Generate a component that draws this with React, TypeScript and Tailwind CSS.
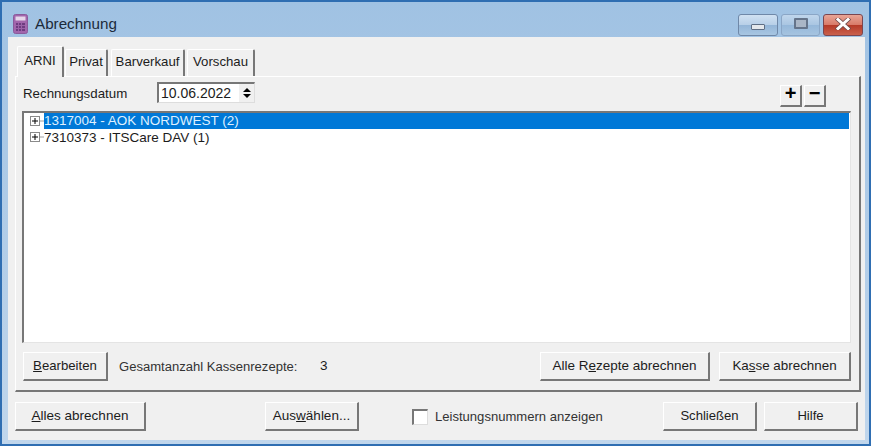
import type { ReactNode } from "react";

function Btn({ className, children }: { className: string; children: ReactNode }) {
  return (
    <button className={`flex items-center justify-center bg-[#f0f0f0] text-[#1c1c1c] border-t border-l border-t-[#fff] border-l-[#fff] border-r-2 border-b-2 border-r-[#777] border-b-[#777] ${className}`}>
      <span>{children}</span>
    </button>
  );
}

function Tab({ label, active, className }: { label: string; active?: boolean; className: string }) {
  return (
    <div className={`flex items-center justify-center bg-[#f0f0f0] text-[13.2px] text-[#1c1c1c] border-t border-l border-t-[#fff] border-l-[#fff] border-r-2 border-r-[#777] rounded-t-[2px] ${active ? "h-[31px] pb-[2px] -mb-px" : "h-[27px] pb-[3px]"} ${className}`}>
      {label}
    </div>
  );
}

function Expander() {
  return (
    <svg width="14" height="11" viewBox="0 0 14 11" className="shrink-0">
      <rect x="0.5" y="0.5" width="9" height="9" fill="#fff" stroke="#8a8a8a" />
      <path d="M2 5h6M5 2v6" stroke="#000" strokeWidth="1" />
      <path d="M10 5h4" stroke="#a0a0a0" strokeWidth="1" />
    </svg>
  );
}

function CalcIcon() {
  return (
    <svg width="15" height="20" viewBox="0 0 15 20" className="shrink-0">
      <rect x="0.5" y="0.5" width="14" height="19" rx="2" fill="#a266ac" stroke="#8a5a9c" />
      <rect x="2.5" y="2.5" width="10" height="4" fill="#e6d6ea" />
      <rect x="3" y="9" width="9" height="8" fill="#6e3c80" />
      <path d="M5.5 9v8M8.5 9v8M3 11.5h9M3 14.5h9" stroke="#9a62a8" strokeWidth="1" />
    </svg>
  );
}

function CaptionButton({ className, children }: { className: string; children: ReactNode }) {
  return (
    <div className={`flex items-center justify-center h-[22px] rounded-[3px] border ${className}`}>
      {children}
    </div>
  );
}

export default function App() {
  return (
    <div className="w-[871px] h-[446px] flex flex-col bg-gradient-to-b from-[#a0c2e3] to-[#c0d6ec] border-t-2 border-x-2 border-[#2f6eb2] border-b-[2px] font-['Liberation_Sans',Arial,sans-serif] text-[13.5px] text-[#1c1c1c]">
      {/* title bar */}
      <div className="h-[35px] flex items-center pl-[11px] pr-[6px] shrink-0">
        <div className="flex items-center mt-[9px]">
          <CalcIcon />
          <span className="ml-[7px] text-[15.2px] text-[#1c2a3a]">Abrechnung</span>
        </div>
        <div className="ml-auto flex gap-[3px] mt-[10px]">
          <CaptionButton className="w-[40px] border-[#6f88a8] bg-[linear-gradient(#d0e1f2_0%,#b8d0e8_48%,#94b6d8_52%,#a8c6e2_100%)]">
            <div className="w-[14px] h-[6px] mt-[5px] bg-[#e4e8ec] border border-[#5f6f85] rounded-[1px]" />
          </CaptionButton>
          <CaptionButton className="w-[39px] border-[#8aa6c6] bg-[linear-gradient(#c0d6ec_0%,#aac6e2_48%,#96b8da_52%,#a6c4e0_100%)]">
            <div className="w-[14px] h-[11px] bg-[#aab6c6] border-2 border-[#65748a] rounded-[1px] -mt-[2px]" />
          </CaptionButton>
          <CaptionButton className="w-[40px] border-[#7a4650] bg-[linear-gradient(#e8a596_0%,#d87b6a_48%,#b53a28_52%,#c9604c_100%)]">
            <svg width="16" height="12" viewBox="0 0 16 12" className="-mt-[1px]">
              <path d="M3 1.5 L13 10.5 M13 1.5 L3 10.5" stroke="#6e4a4a" strokeWidth="4.4" strokeLinecap="square" />
              <path d="M3 1.5 L13 10.5 M13 1.5 L3 10.5" stroke="#fff" strokeWidth="3" strokeLinecap="square" />
            </svg>
          </CaptionButton>
        </div>
      </div>

      {/* client */}
      <div className="flex-1 ml-[6px] mr-[4px] mb-[4px] bg-[#f0f0f0] flex flex-col pl-[7px] pr-[4px] pt-[9px]">
        <div className="flex items-end h-[30px] pl-[2px] relative z-10">
          <Tab label="ARNI" active className="w-[47px]" />
          <Tab label="Privat" className="w-[43px] ml-[1px]" />
          <Tab label="Barverkauf" className="w-[74px] ml-[3px]" />
          <Tab label="Vorschau" className="w-[68px] ml-[2px]" />
        </div>

        <div className="h-[316px] flex flex-col border-t border-l border-t-[#fff] border-l-[#fff] border-r-2 border-b-2 border-r-[#777] border-b-[#777] pl-[7px] pr-[7px]">
          <div className="h-[34px] flex items-center shrink-0">
            <span className="w-[134px] -mt-[1px] text-[13.3px]">Rechnungsdatum</span>
            <div className="w-[98px] h-[21px] -mt-[3px] flex items-center bg-white border-t-2 border-l-2 border-t-[#777] border-l-[#777] border-r border-b border-r-[#ddd] border-b-[#ddd]">
              <span className="flex-1 pl-[2px] text-[14px]">10.06.2022</span>
              <div className="w-[15px] h-full bg-[#f0f0f0] flex flex-col items-center justify-center gap-[2px]">
                <div className="w-0 h-0 border-x-[4px] border-x-transparent border-b-[4px] border-b-black" />
                <div className="w-0 h-0 border-x-[4px] border-x-transparent border-t-[4px] border-t-black" />
              </div>
            </div>
            <div className="ml-auto mr-[26px] mt-[3px] flex gap-[2px]">
              <Btn className="w-[22px] h-[22px] font-bold"><span className="text-[20px] leading-none text-black">+</span></Btn>
              <Btn className="w-[22px] h-[22px] font-bold"><span className="text-[20px] leading-none text-black">−</span></Btn>
            </div>
          </div>

          <div className="h-[232px] shrink-0 bg-white border-t-2 border-l-2 border-t-[#777] border-l-[#777] border-r border-b border-r-[#e4e4e4] border-b-[#e4e4e4] pl-[6px] pr-[1px] -ml-px mr-[1px]">
            <div className="flex items-center h-[17px]">
              <Expander />
              <span className="flex-1 bg-[#0078d7] text-[#dff0ff] text-[13.5px] leading-[16px] h-[16px] -mt-px">1317004 - AOK NORDWEST (2)</span>
            </div>
            <div className="flex items-center h-[17px] -mt-px">
              <Expander />
              <span className="text-[13.5px] leading-[17px]">7310373 - ITSCare DAV (1)</span>
            </div>
          </div>

          <div className="flex items-center h-[29px] mt-[9px] pr-[1px]">
            <Btn className="w-[85px] h-[29px] text-[13.2px]"><u>B</u>earbeiten</Btn>
            <span className="ml-[11px] w-[201px] text-[13.05px] text-[#333]">Gesamtanzahl Kassenrezepte:</span>
            <span className="text-[13.5px]">3</span>
            <Btn className="ml-auto w-[170px] h-[29px]">Alle R<u>e</u>zepte abrechnen</Btn>
            <Btn className="ml-[9px] w-[132px] h-[29px] text-[13.4px]">Ka<u>s</u>se abrechnen</Btn>
          </div>
        </div>

        <div className="flex items-center h-[29px] mt-[10px] pr-[3px]">
          <Btn className="w-[131px] h-[29px]"><u>A</u>lles abrechnen</Btn>
          <Btn className="ml-[119px] w-[94px] h-[29px]">Aus<u>w</u>ählen...</Btn>
          <div className="ml-[53px] flex items-center">
            <div className="w-[16px] h-[16px] bg-white border-t-2 border-l-2 border-t-[#777] border-l-[#777] border-r border-b border-r-[#ddd] border-b-[#ddd]" />
            <span className="ml-[7px] text-[13.07px] text-[#333]">Leistungsnummern anzeigen</span>
          </div>
          <Btn className="ml-auto w-[94px] h-[29px] text-[13.1px]">Schließen</Btn>
          <Btn className="ml-[7px] w-[94px] h-[29px] text-[13.1px]">Hilfe</Btn>
        </div>
      </div>
    </div>
  );
}
